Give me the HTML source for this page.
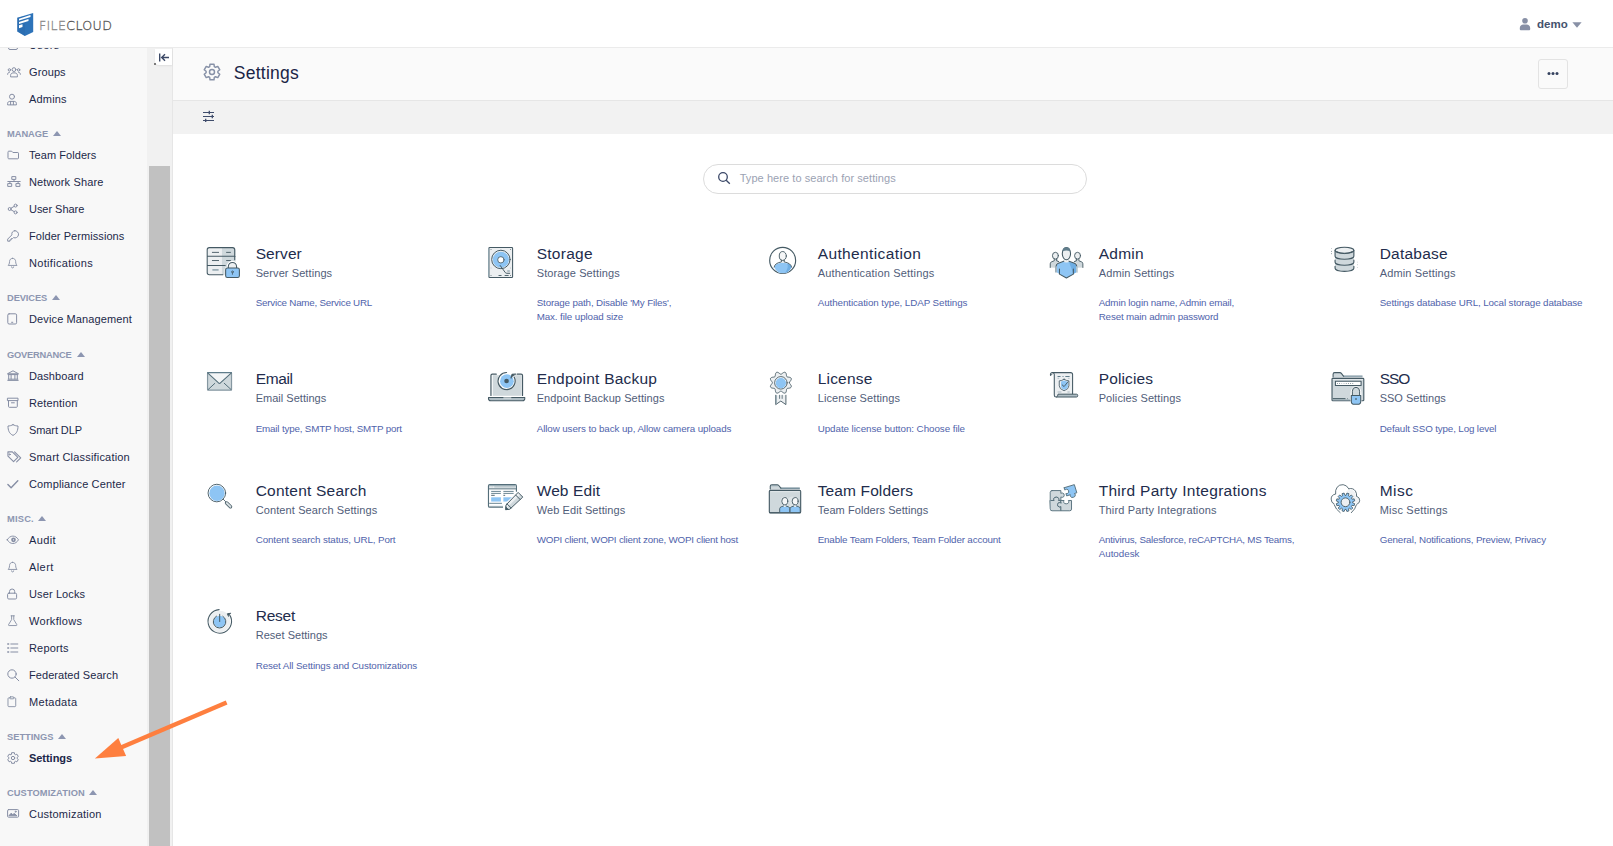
<!DOCTYPE html>
<html lang="en"><head><meta charset="utf-8"><title>FileCloud Settings</title>
<style>
*{box-sizing:border-box;margin:0;padding:0}
html,body{width:1613px;height:846px;overflow:hidden;background:#fff;font-family:"Liberation Sans", sans-serif;}
body{position:relative}
.abs,.si,.sh,.ct,.cs,.cd,.bi{position:absolute}
#top{position:absolute;left:0;top:0;width:1613px;height:48px;background:#fff;border-bottom:1px solid #ebebeb;z-index:5}
#side{position:absolute;left:0;top:48px;width:147px;height:798px;background:#f8f8f8;overflow:hidden}
#sidein{position:absolute;left:0;top:-48px;width:147px}
#track{position:absolute;left:147px;top:48px;width:25px;height:798px;background:#f1f1f1}
#thumb{position:absolute;left:149px;top:166px;width:21px;height:680px;background:#c1c1c1}
#vline{position:absolute;left:172px;top:48px;width:1px;height:798px;background:#e6e6e6}
#collapse{position:absolute;left:155px;top:48.500px;width:17px;height:16.500px;background:#fff;border-bottom-left-radius:4px;box-shadow:0 1px 2px rgba(0,0,0,.08)}
#phead{position:absolute;left:173px;top:48px;width:1440px;height:53px;background:#fafafa;border-bottom:1px solid #e6e6e6}
#tool{position:absolute;left:173px;top:101px;width:1440px;height:33px;background:#f2f2f2}
.si{left:0;height:16px;width:147px;white-space:nowrap}
.si svg{position:absolute;left:7.200px;top:1.500px;overflow:visible}
.si span{position:absolute;left:29px;top:0;font-size:11px;line-height:16px;color:#1c2849;letter-spacing:0px}
.si.act span{font-weight:bold;color:#1a2547}
.sh{left:7px;height:14px;white-space:nowrap}
.sh span{font-size:9.300px;line-height:14px;font-weight:bold;color:#8d96b1}
.sh i{position:absolute;top:8px;width:0;height:0;border-left:4.300px solid transparent;border-right:4.300px solid transparent;border-bottom:5px solid #8d96b1}
.ct{font-size:15.5px;line-height:18px;color:#222c4c;white-space:nowrap}
.cs{font-size:11px;line-height:14px;color:#515d79;white-space:nowrap}
.cd{font-size:9.800px;line-height:12px;color:#5063ab;white-space:nowrap}
#title{position:absolute;left:233.800px;top:61px;font-size:17.500px;letter-spacing:.24px;line-height:24px;color:#1b2546}
#search{position:absolute;left:703px;top:164px;width:384px;height:30px;border:1px solid #dcdcdc;border-radius:15px;background:#fff}
#search span{position:absolute;left:35.700px;top:6px;font-size:11px;line-height:14px;color:#9ba2b3;letter-spacing:.06px;white-space:nowrap}
#more{position:absolute;left:1538px;top:59px;width:30px;height:30px;border:1px solid #e3e3e3;border-radius:3px;background:#fafafa}
#user{position:absolute;left:1537px;top:16px;font-size:11.500px;line-height:16px;font-weight:bold;color:#45526e}
</style></head><body>
<div id="side"><div id="sidein">
<div class="si" style="top:37px"><svg width="14" height="14" viewBox="0 0 14 14" fill="none" stroke="#868ea4" stroke-width="1" stroke-linecap="round" stroke-linejoin="round"><rect x="1.5" y="1.5" width="9" height="9" rx="1.5"/></svg><span style="letter-spacing:0.394px">Users</span></div>
<div class="si" style="top:64px"><svg width="14" height="14" viewBox="0 0 14 14" fill="none" stroke="#868ea4" stroke-width="1" stroke-linecap="round" stroke-linejoin="round"><circle cx="7" cy="3.6" r="1.9"/><path d="M3.6 10.5v-1.2c0-1.4 1.1-2.4 2.4-2.4h2c1.3 0 2.4 1 2.4 2.4v1.2z"/><circle cx="2.4" cy="3.9" r="1.2"/><circle cx="11.6" cy="3.9" r="1.2"/><path d="M0.6 8.3c0-1.2.8-2 1.8-2M13.4 8.3c0-1.200-.8-2-1.800-2"/></svg><span style="letter-spacing:0.106px">Groups</span></div>
<div class="si" style="top:91px"><svg width="14" height="14" viewBox="0 0 14 14" fill="none" stroke="#868ea4" stroke-width="1" stroke-linecap="round" stroke-linejoin="round"><circle cx="5" cy="3.700" r="2.500"/><path d="M0.6 11.500v-1c0-1.200.9-2.100 2.100-2.100h4.600c1.200 0 2.100.9 2.100 2.100v1z"/><path d="M3.600 8.500v3M6.400 8.500v3"/></svg><span style="letter-spacing:0.184px">Admins</span></div>
<div class="sh" style="top:123px"><span style="letter-spacing:-0.025px">MANAGE</span><i style="left:45.9px"></i></div>
<div class="si" style="top:147px"><svg width="14" height="14" viewBox="0 0 14 14" fill="none" stroke="#868ea4" stroke-width="1" stroke-linecap="round" stroke-linejoin="round"><path d="M1 2.900c0-.4.300-.700.700-.700h3l1.200 1.300h4.900c.4 0 .7.300.7.700v4.900c0 .4-.3.700-.7.700h-9.100c-.4 0-.7-.3-.7-.7z"/></svg><span style="letter-spacing:0.061px">Team Folders</span></div>
<div class="si" style="top:174px"><svg width="14" height="14" viewBox="0 0 14 14" fill="none" stroke="#868ea4" stroke-width="1" stroke-linecap="round" stroke-linejoin="round"><g transform="translate(.5 0)"><rect x="4.700" y="0.600" width="3.600" height="2.800"/><rect x="0.600" y="7.600" width="3.600" height="2.800"/><rect x="8.800" y="7.600" width="3.600" height="2.800"/><path d="M6.500 3.400v2.100M2.400 7.600v-2.100h8.200v2.100M0.300 5.500h12.400"/></g></svg><span style="letter-spacing:0.129px">Network Share</span></div>
<div class="si" style="top:201px"><svg width="14" height="14" viewBox="0 0 14 14" fill="none" stroke="#868ea4" stroke-width="1" stroke-linecap="round" stroke-linejoin="round"><circle cx="8.600" cy="2.600" r="1.500"/><circle cx="2.700" cy="6" r="1.500"/><circle cx="8.600" cy="9.400" r="1.500"/><path d="M4 5.200l3.300-1.900M4 6.800l3.300 1.900"/></svg><span style="letter-spacing:-0.037px">User Share</span></div>
<div class="si" style="top:228px"><svg width="14" height="14" viewBox="0 0 14 14" fill="none" stroke="#868ea4" stroke-width="1" stroke-linecap="round" stroke-linejoin="round"><path d="M7.800 0.700a3.600 3.600 0 1 1-1.300 6.900l-1 1h-1.300v1.300h-1.300v1.300h-2.200v-2.100l4.200-4.200a3.600 3.600 0 0 1 2.900-4.200z"/></svg><span style="letter-spacing:0.068px">Folder Permissions</span></div>
<div class="si" style="top:255px"><svg width="14" height="14" viewBox="0 0 14 14" fill="none" stroke="#868ea4" stroke-width="1" stroke-linecap="round" stroke-linejoin="round"><path transform="translate(.2 .6) scale(.9)" d="M6 0.800c2.100 0 3.400 1.600 3.400 3.600 0 2.600 1.100 3.800 1.500 4.300h-9.800c.4-.5 1.500-1.700 1.500-4.300 0-2 1.300-3.600 3.400-3.600zM4.800 10.300a1.200 1.200 0 0 0 2.400 0"/></svg><span style="letter-spacing:0.316px">Notifications</span></div>
<div class="sh" style="top:287px"><span style="letter-spacing:-0.088px">DEVICES</span><i style="left:45.0px"></i></div>
<div class="si" style="top:311px"><svg width="14" height="14" viewBox="0 0 14 14" fill="none" stroke="#868ea4" stroke-width="1" stroke-linecap="round" stroke-linejoin="round"><rect x="0.800" y="0.800" width="8.800" height="10.200" rx="1.300"/><path d="M4.600 9.300h1.200"/></svg><span style="letter-spacing:0.126px">Device Management</span></div>
<div class="sh" style="top:344px"><span style="letter-spacing:-0.205px">GOVERNANCE</span><i style="left:69.5px"></i></div>
<div class="si" style="top:368px"><svg width="14" height="14" viewBox="0 0 14 14" fill="none" stroke="#868ea4" stroke-width="1" stroke-linecap="round" stroke-linejoin="round"><path d="M0.800 3.600l5.200-2.800 5.200 2.800zM1.700 5v4M4.100 5v4M7.900 5v4M10.300 5v4M0.800 10.400h10.400M1.200 4.600h9.600M1.200 9.200h9.600"/></svg><span style="letter-spacing:0.086px">Dashboard</span></div>
<div class="si" style="top:395px"><svg width="14" height="14" viewBox="0 0 14 14" fill="none" stroke="#868ea4" stroke-width="1" stroke-linecap="round" stroke-linejoin="round"><rect x="0.800" y="1.200" width="10.200" height="2.400"/><path d="M1.500 3.600v5.900c0 .5.400.8.800.8h7.200c.4 0 .8-.3.800-.8v-5.900M4.500 5.800h2.800"/></svg><span style="letter-spacing:0.152px">Retention</span></div>
<div class="si" style="top:422px"><svg width="14" height="14" viewBox="0 0 14 14" fill="none" stroke="#868ea4" stroke-width="1" stroke-linecap="round" stroke-linejoin="round"><path d="M6 0.700c1.700.9 3.300 1.200 5 1.300 0 4.300-1.200 7.600-5 9.400-3.800-1.800-5-5.100-5-9.400 1.700-.1 3.300-.4 5-1.300z"/></svg><span style="letter-spacing:-0.087px">Smart DLP</span></div>
<div class="si" style="top:449px"><svg width="14" height="14" viewBox="0 0 14 14" fill="none" stroke="#868ea4" stroke-width="1" stroke-linecap="round" stroke-linejoin="round"><path transform="translate(.3 -.6) scale(1.1)" d="M0.600 1.300h4l5 5-3.900 3.900-5.100-5zM6.600 1.300l5.600 5.500-3.700 3.700"/><circle cx="2.700" cy="3.400" r=".6"/></svg><span style="letter-spacing:0.184px">Smart Classification</span></div>
<div class="si" style="top:476px"><svg width="14" height="14" viewBox="0 0 14 14" fill="none" stroke="#868ea4" stroke-width="1" stroke-linecap="round" stroke-linejoin="round"><path d="M0.900 6.600l3.200 3.200 6.700-7" stroke-width="1.400"/></svg><span style="letter-spacing:0.134px">Compliance Center</span></div>
<div class="sh" style="top:508px"><span style="letter-spacing:0.217px">MISC.</span><i style="left:31.4px"></i></div>
<div class="si" style="top:532px"><svg width="14" height="14" viewBox="0 0 14 14" fill="none" stroke="#868ea4" stroke-width="1" stroke-linecap="round" stroke-linejoin="round"><path transform="translate(-.3 .3) scale(.95)" d="M0.600 5.800c1.500-2.600 3.500-3.900 5.900-3.900s4.400 1.300 5.900 3.900c-1.500 2.600-3.500 3.900-5.900 3.900s-4.400-1.300-5.900-3.900z"/><circle cx="6.500" cy="5.800" r="1.500" stroke-width="1.700"/></svg><span style="letter-spacing:0.357px">Audit</span></div>
<div class="si" style="top:559px"><svg width="14" height="14" viewBox="0 0 14 14" fill="none" stroke="#868ea4" stroke-width="1" stroke-linecap="round" stroke-linejoin="round"><path transform="translate(.2 .6) scale(.9)" d="M6 0.800c2.100 0 3.400 1.600 3.400 3.600 0 2.600 1.100 3.800 1.500 4.300h-9.800c.4-.5 1.500-1.700 1.500-4.300 0-2 1.300-3.600 3.400-3.600zM4.800 10.300a1.200 1.200 0 0 0 2.400 0"/></svg><span style="letter-spacing:0.42px">Alert</span></div>
<div class="si" style="top:586px"><svg width="14" height="14" viewBox="0 0 14 14" fill="none" stroke="#868ea4" stroke-width="1" stroke-linecap="round" stroke-linejoin="round"><rect x="0.600" y="5.200" width="9" height="5.800" rx="1.200"/><path d="M2.500 5.200v-1.600a2.600 2.600 0 0 1 5.200 0v1.600"/></svg><span style="letter-spacing:0.12px">User Locks</span></div>
<div class="si" style="top:613px"><svg width="14" height="14" viewBox="0 0 14 14" fill="none" stroke="#868ea4" stroke-width="1" stroke-linecap="round" stroke-linejoin="round"><path transform="translate(.3 .2) scale(.9)" d="M4.200 0.700h3.600M4.800 0.700v4.200l-3.400 5.600c-.3.500 0 1 .6 1h8c.6 0 .9-.5.600-1l-3.400-5.600v-4.200"/></svg><span style="letter-spacing:0.297px">Workflows</span></div>
<div class="si" style="top:640px"><svg width="14" height="14" viewBox="0 0 14 14" fill="none" stroke="#868ea4" stroke-width="1" stroke-linecap="round" stroke-linejoin="round"><path d="M3.800 2h7M3.800 6h7M3.800 10h7"/><path d="M0.800 2h.8M0.800 6h.8M0.800 10h.8" stroke-width="1.500"/></svg><span style="letter-spacing:0.164px">Reports</span></div>
<div class="si" style="top:667px"><svg width="14" height="14" viewBox="0 0 14 14" fill="none" stroke="#868ea4" stroke-width="1" stroke-linecap="round" stroke-linejoin="round"><circle cx="5" cy="5" r="4.200"/><path d="M8.100 8.100l3.700 3.700"/></svg><span style="letter-spacing:0.063px">Federated Search</span></div>
<div class="si" style="top:694px"><svg width="14" height="14" viewBox="0 0 14 14" fill="none" stroke="#868ea4" stroke-width="1" stroke-linecap="round" stroke-linejoin="round"><g transform="translate(0 .3) scale(.9)"><path d="M3.300 1.700h-1.300c-.5 0-.9.400-.9.900v8c0 .5.400.9.900.9h6.800c.5 0 .9-.4.900-.9v-8c0-.5-.4-.9-.9-.9h-1.300"/><rect x="3.300" y="0.600" width="4.200" height="2.200" rx=".6"/></g></svg><span style="letter-spacing:0.305px">Metadata</span></div>
<div class="sh" style="top:726px"><span style="letter-spacing:0.0px">SETTINGS</span><i style="left:51.2px"></i></div>
<div class="si act" style="top:750px"><svg width="14" height="14" viewBox="0 0 14 14" fill="none" stroke="#868ea4" stroke-width="1" stroke-linecap="round" stroke-linejoin="round"><circle cx="6" cy="6" r="1.700"/><path d="M4.4 2.2L4.6 0.7L7.4 0.7L7.6 2.2L8.4 2.7L9.9 2.2L11.3 4.5L10.1 5.5L10.1 6.5L11.3 7.5L9.9 9.8L8.4 9.3L7.6 9.8L7.4 11.3L4.6 11.3L4.4 9.8L3.6 9.3L2.1 9.8L0.7 7.5L1.9 6.5L1.9 5.5L0.7 4.5L2.1 2.2L3.6 2.7z"/></svg><span style="letter-spacing:-0.042px">Settings</span></div>
<div class="sh" style="top:782px"><span style="letter-spacing:0.09px">CUSTOMIZATION</span><i style="left:82.4px"></i></div>
<div class="si" style="top:806px"><svg width="14" height="14" viewBox="0 0 14 14" fill="none" stroke="#868ea4" stroke-width="1" stroke-linecap="round" stroke-linejoin="round"><rect x="0.600" y="1.600" width="11" height="7.600" rx="1"/><path d="M2.200 7.400l2-2.200 1.600 1.500 1.400-1.200 2.400 2z" fill="#868ea4"/><circle cx="8.600" cy="3.700" r=".5"/></svg><span style="letter-spacing:0.226px">Customization</span></div>
</div></div>
<div id="track"></div><div id="thumb"></div><div id="vline"></div>
<div id="top">
<svg class="abs" style="left:15px;top:10px" width="22" height="28" viewBox="0 0 22 28"><path d="M2.300 7.800L18.200 2.900v19.200l-8.300 3.900-7.600-4.600z" fill="#2d73b9"/><path d="M2.300 7.800L10 6v20l-7.700-4.600z" fill="#2a69ad" opacity=".55"/><path d="M4 8.700l11.500-3.600v1.900L4 10.600zM4 12l9.500-2.900v1.900L4 13.900zM4 15.300l3.500-1.100v2.900L4 18.200z" fill="#fff"/></svg>
<div class="abs" id="logo" style="left:38.900px;top:16.700px;-webkit-text-stroke:.3px;font-family:'DejaVu Sans Light','DejaVu Sans',sans-serif;font-weight:200;font-size:12.600px;line-height:17px;letter-spacing:.36px;white-space:nowrap"><span style="color:#8a8a8a">FILE</span><span style="color:#555">CLOUD</span></div>
<svg class="abs" style="left:1519.200px;top:16.500px" width="12" height="14" viewBox="0 0 12 14"><circle cx="6" cy="3.800" r="2.800" fill="#8890a6"/><path d="M0.800 12.300v-1.300c0-2.300 1.800-3.600 3.400-3.600h3.600c1.600 0 3.400 1.300 3.400 3.600v1.300c0 .6-.4.900-.9.900h-8.600c-.5 0-.9-.3-.9-.9z" fill="#8890a6"/></svg>
<div id="user">demo</div>
<svg class="abs" style="left:1571.800px;top:22px" width="10" height="6" viewBox="0 0 10 6"><path d="M0.400 0.300h9.200L5 5.700z" fill="#8890a6"/></svg>
</div>
<div id="collapse"><svg width="17" height="17" viewBox="0 0 17 17" fill="none" stroke="#3c4966" stroke-width="1.400"><path d="M4.700 4.500v8M14 8.500H6.800M10 5.200L6.700 8.500l3.300 3.300"/></svg></div>
<div id="phead"></div><div class="abs" style="left:154px;top:63px;width:1.500px;height:1.500px;background:#555;border-radius:1px"></div>
<svg class="abs" style="left:202.100px;top:62.200px" width="20" height="20" viewBox="0 0 20 20" fill="none" stroke="#8791a7" stroke-width="1.450" stroke-linejoin="round"><circle cx="10" cy="10" r="2.500"/><path d="M7.7 4.6L8.0 2.2L12.0 2.2L12.3 4.6L13.5 5.3L15.8 4.4L17.8 7.8L15.9 9.3L15.9 10.7L17.8 12.2L15.8 15.6L13.5 14.7L12.3 15.4L12.0 17.8L8.0 17.8L7.7 15.4L6.5 14.7L4.2 15.6L2.2 12.2L4.1 10.7L4.1 9.3L2.2 7.8L4.2 4.4L6.5 5.3z"/></svg>
<div id="title">Settings</div>
<div id="more"><svg width="28" height="28" viewBox="0 0 28 28"><circle cx="10" cy="13.500" r="1.500" fill="#35425f"/><circle cx="14" cy="13.500" r="1.500" fill="#35425f"/><circle cx="18" cy="13.500" r="1.500" fill="#35425f"/></svg></div>
<div id="tool"></div>
<svg class="abs" style="left:202px;top:110px" width="13" height="12" viewBox="0 0 13 12" fill="none" stroke="#3f4c6b" stroke-width="1"><path d="M1 2.500h11M1 6.500h11M1 10.500h11"/><path d="M7.300 0.800v3.400M10.300 4.800v3.400M3.700 8.800v3.400" stroke-width="1.300"/></svg>
<div id="search"><svg class="abs" style="left:13.300px;top:6.200px" width="14" height="14" viewBox="0 0 14 14" fill="none" stroke="#3b4868" stroke-width="1.300"><circle cx="6" cy="6" r="4.300"/><path d="M9.200 9.200l3.600 3.600"/></svg><span>Type here to search for settings</span></div>
<div class="ct" style="left:255.7px;top:245px;letter-spacing:0.089px">Server</div>
<div class="cs" style="left:255.7px;top:266px;letter-spacing:0.085px">Server Settings</div>
<div class="cd" style="left:255.7px;top:297.2px;letter-spacing:-0.224px">Service Name, Service URL</div>
<svg class="bi" style="left:195px;top:235px" width="60" height="60" viewBox="0 0 60 60"><g transform="scale(0.07092)" fill="none" stroke="#455a64" stroke-width="15" stroke-linecap="round" stroke-linejoin="round">
<path d="M202 178h338q30 0 30 30v322q0 30-30 30h-338q-30 0-30-30v-322q0-30 30-30z" fill="#eceff1" stroke="none"/>
<path d="M380 178h160q30 0 30 30v322q0 30-30 30h-160z" fill="#cfd8dc" stroke="none"/>
<path d="M560 350V208q0-30-30-30H202q-30 0-30 30v322q0 30 30 30h190M176 300h390M176 430h250"/>
<path d="M245 245h88M445 245h55M245 360h88M445 360h55" stroke-width="13"/>
<path d="M245 492h88" stroke="#90a4ae" stroke-width="22" stroke-linecap="butt"/>
<path d="M470 470v-25a58 58 0 0 1 116 0v25" stroke="#fff" stroke-width="45"/>
<rect x="418" y="452" width="222" height="160" rx="30" fill="#fff" stroke="none"/>
<path d="M470 470v-25a58 58 0 0 1 116 0v25" fill="#eceff1"/>
<rect x="432" y="466" width="194" height="132" rx="24" fill="#8ec5f4" stroke="#455a64"/>
<circle cx="528" cy="520" r="13" stroke-width="11"/><path d="M528 533v22" stroke-width="11"/>
</g></svg>
<div class="ct" style="left:536.7px;top:245px;letter-spacing:0.268px">Storage</div>
<div class="cs" style="left:536.7px;top:266px;letter-spacing:0.111px">Storage Settings</div>
<div class="cd" style="left:536.7px;top:297.2px;letter-spacing:-0.159px">Storage path, Disable 'My Files',</div>
<div class="cd" style="left:536.7px;top:311.2px;letter-spacing:-0.109px">Max. file upload size</div>
<svg class="bi" style="left:475px;top:235px" width="60" height="60" viewBox="0 0 60 60"><g transform="scale(0.07092)" fill="none" stroke="#455a64" stroke-width="15" stroke-linecap="round" stroke-linejoin="round">
<rect x="196" y="176" width="334" height="424" rx="12" fill="#eceff1"/>
<path d="M192 190v395" stroke="#90a4ae" stroke-width="14"/>
<circle cx="365" cy="345" r="130" fill="#eceff1" stroke-width="14"/>
<circle cx="365" cy="348" r="113" fill="#8ec5f4" stroke="none"/>
<circle cx="365" cy="350" r="45" fill="#fff" stroke-width="12"/>
<path d="M355 430l72 100q8 10 22 10h40" stroke-width="14"/>
<rect x="455" y="495" width="36" height="26" fill="#90a4ae" stroke="none" opacity=".7"/>
<path d="M332 571h42M418 571h56" stroke-width="13" stroke-linecap="butt"/>
<g fill="#455a64" stroke="none"><circle cx="226" cy="206" r="7"/><circle cx="500" cy="206" r="7"/><circle cx="226" cy="466" r="6" opacity=".5"/><circle cx="500" cy="466" r="6" opacity=".5"/><circle cx="226" cy="572" r="7"/><circle cx="500" cy="572" r="7"/></g>
</g></svg>
<div class="ct" style="left:817.7px;top:245px;letter-spacing:0.381px">Authentication</div>
<div class="cs" style="left:817.7px;top:266px;letter-spacing:0.186px">Authentication Settings</div>
<div class="cd" style="left:817.7px;top:297.2px;letter-spacing:-0.077px">Authentication type, LDAP Settings</div>
<svg class="bi" style="left:755px;top:235px" width="60" height="60" viewBox="0 0 60 60"><g transform="scale(0.07092)" fill="none" stroke="#455a64" stroke-width="15" stroke-linecap="round" stroke-linejoin="round">
<circle cx="390" cy="358" r="183" fill="#fff" stroke-width="16"/>
<path d="M372 345v35q-100 20-102 70q10 40 60 75q60 28 130 0q50-35 58-75q-5-50-106-70v-35z" fill="#eceff1" stroke="none"/>
<path d="M275 455q0-55 117-65q120 10 122 65q-15 45-60 70q-62 25-125 0q-45-28-54-70z" fill="#8ec5f4" stroke="none"/>
<path d="M455 400q55 15 59 55q-15 45-60 70q-20 8-35 10q60-60 36-135z" fill="#6faee3" stroke="none"/>
<ellipse cx="392" cy="296" rx="50" ry="63" fill="#f5f6f7" stroke-width="13"/>
<path d="M372 352v28q-95 15-102 72M412 352v28q95 15 104 72" stroke-width="13"/>
</g></svg>
<div class="ct" style="left:1098.7px;top:245px;letter-spacing:0.241px">Admin</div>
<div class="cs" style="left:1098.7px;top:266px;letter-spacing:0.124px">Admin Settings</div>
<div class="cd" style="left:1098.7px;top:297.2px;letter-spacing:-0.151px">Admin login name, Admin email,</div>
<div class="cd" style="left:1098.7px;top:311.2px;letter-spacing:-0.16px">Reset main admin password</div>
<svg class="bi" style="left:1035px;top:235px" width="60" height="60" viewBox="0 0 60 60"><g transform="scale(0.07092)" fill="none" stroke="#455a64" stroke-width="15" stroke-linecap="round" stroke-linejoin="round">
<path d="M215 460v-50q0-25 25-32l50-15v-25h-5M330 380l-40-17" fill="#cfd8dc" stroke="none"/>
<path d="M215 460v-55q0-20 22-28l45-16v-22h40v22l25 10-45 30-10 60z" fill="#cfd8dc" stroke="none"/>
<path d="M675 460v-55q0-20-22-28l-45-16v-22h-40v22l-25 10 45 30 10 60z" fill="#cfd8dc" stroke="none"/>
<ellipse cx="288" cy="292" rx="42" ry="48" fill="#eceff1" stroke-width="13"/>
<ellipse cx="600" cy="292" rx="42" ry="48" fill="#eceff1" stroke-width="13"/>
<path d="M215 458v-52q0-22 22-29l35-14v-22M304 339v24l30 12" stroke-width="13"/>
<path d="M675 458v-52q0-22-22-29l-35-14v-22M586 339v24l-30 12" stroke-width="13"/>
<path d="M295 530v-95q0-30 30-40l80-28v-30h76v30l80 28q30 10 30 40v95l-48 28-100 52-100-52z" fill="#fff" stroke="none"/>
<path d="M305 525v-90q0-25 28-35l75-28h70l75 28q28 10 28 35v90l-40 25-98 55-98-55z" fill="#8ec5f4" stroke="none"/>
<path d="M480 385l73 15q28 10 28 35v90l-40 25q-30-90-61-165z" fill="#6faee3" stroke="none"/>
<path d="M295 530v-95" stroke="#90a4ae" stroke-width="22" stroke-linecap="butt"/>
<path d="M592 530v-95" stroke="#90a4ae" stroke-width="14" stroke-linecap="butt"/>
<path d="M405 345v28q0 15 38 15t38-15v-28" fill="#eceff1" stroke="none"/>
<ellipse cx="443" cy="262" rx="58" ry="87" fill="#eceff1"/>
<path d="M388 232q0-58 55-58t55 58q-55-30-110 0z" fill="#607d8b" stroke="none"/>
<path d="M300 432q0-25 28-35l78-28M586 432q0-25-28-35l-78-28M345 480v72l98 55 98-55v-72"/>
</g></svg>
<div class="ct" style="left:1379.7px;top:245px;letter-spacing:0.235px">Database</div>
<div class="cs" style="left:1379.7px;top:266px;letter-spacing:0.148px">Admin Settings</div>
<div class="cd" style="left:1379.7px;top:297.2px;letter-spacing:-0.118px">Settings database URL, Local storage database</div>
<svg class="bi" style="left:1315px;top:235px" width="60" height="60" viewBox="0 0 60 60"><g transform="scale(0.07092)" fill="none" stroke="#455a64" stroke-width="15" stroke-linecap="round" stroke-linejoin="round">
<path d="M283 215v255a132 42 0 0 0 265 0v-255z" fill="#cfd8dc" stroke="none"/>
<ellipse cx="415.5" cy="215" rx="132.5" ry="42" fill="#eceff1" stroke-width="16"/>
<path d="M310 238q40 24 105 24t107-24" stroke-width="14"/>
<path d="M283 215v85a132.5 42 0 0 0 265 0v-85M283 355v30a132.5 42 0 0 0 265 0v-30M283 440v30a132.5 42 0 0 0 265 0v-30" stroke-width="16"/>
<g fill="#455a64" stroke="none"><circle cx="233" cy="190" r="6" opacity=".6"/><circle cx="233" cy="228" r="7"/><circle cx="233" cy="265" r="7"/><circle cx="597" cy="382" r="6" opacity=".5"/><circle cx="597" cy="420" r="6" opacity=".6"/><circle cx="597" cy="458" r="6" opacity=".5"/></g>
</g></svg>
<div class="ct" style="left:255.7px;top:370px;letter-spacing:-0.364px">Email</div>
<div class="cs" style="left:255.7px;top:391px;letter-spacing:0.015px">Email Settings</div>
<div class="cd" style="left:255.7px;top:423.2px;letter-spacing:-0.167px">Email type, SMTP host, SMTP port</div>
<svg class="bi" style="left:195px;top:360px" width="60" height="60" viewBox="0 0 60 60"><g transform="scale(0.07092)" fill="none" stroke="#455a64" stroke-width="15" stroke-linecap="round" stroke-linejoin="round">
<rect x="177" y="178" width="338" height="248" rx="10" fill="#cfd8dc" stroke="#8597a1" stroke-width="17"/>
<path d="M180 180l165 154 167-154z" fill="#f3f5f6" stroke="none"/>
<path d="M178 178h336" stroke="#607d8b" stroke-width="15"/>
<path d="M182 186l150 138q13 10 26 0l152-138" stroke="#546e7a" stroke-width="15"/>
<path d="M186 416l93-86M508 416l-96-88" stroke="#546e7a" stroke-width="14"/>
</g></svg>
<div class="ct" style="left:536.7px;top:370px;letter-spacing:0.221px">Endpoint Backup</div>
<div class="cs" style="left:536.7px;top:391px;letter-spacing:0.079px">Endpoint Backup Settings</div>
<div class="cd" style="left:536.7px;top:423.2px;letter-spacing:-0.093px">Allow users to back up, Allow camera uploads</div>
<svg class="bi" style="left:475px;top:360px" width="60" height="60" viewBox="0 0 60 60"><g transform="scale(0.07092)" fill="none" stroke="#455a64" stroke-width="15" stroke-linecap="round" stroke-linejoin="round">
<path d="M250 214h405v291h-405z" fill="#cfd8dc" stroke="none"/>
<path d="M300 200h-55q-20 0-20 20v280M595 200h55q20 0 20 20v280" stroke-width="17"/>
<path d="M190 528h512v15q0 32-32 32h-448q-32 0-32-32z" fill="#b0bec5" stroke-width="15"/>
<path d="M400 528h112v14h-112z" fill="#eceff1" stroke="none"/>
<circle cx="447" cy="296" r="132" fill="#fff" stroke="none"/>
<circle cx="450" cy="298" r="97" fill="#8ec5f4" stroke="none"/>
<circle cx="445" cy="296" r="33" fill="#455a64" stroke="none"/>
<path d="M445 176a121 121 0 1 0 107 64" stroke-width="17"/>
<path d="M508 254l15-50 50-5" stroke-width="17"/>
<path d="M510 248l15-44 38 8z" fill="#455a64" stroke="none"/>
</g></svg>
<div class="ct" style="left:817.7px;top:370px;letter-spacing:0.195px">License</div>
<div class="cs" style="left:817.7px;top:391px;letter-spacing:0.112px">License Settings</div>
<div class="cd" style="left:817.7px;top:423.2px;letter-spacing:-0.056px">Update license button: Choose file</div>
<svg class="bi" style="left:755px;top:360px" width="60" height="60" viewBox="0 0 60 60"><g transform="scale(0.07092)" fill="none" stroke="#455a64" stroke-width="15" stroke-linecap="round" stroke-linejoin="round">
<path d="M485.0 320.0L485.8 324.7L488.2 329.7L491.9 335.0L496.5 340.8L501.3 347.1L505.9 353.8L509.5 360.8L511.8 367.7L512.4 374.4L511.0 380.5L507.6 385.8L502.5 390.1L496.0 393.4L488.5 395.7L480.6 397.2L472.7 398.3L465.4 399.1L459.0 400.3L453.8 402.1L449.9 404.9L447.1 408.8L445.3 414.0L444.1 420.4L443.3 427.7L442.2 435.6L440.7 443.5L438.4 451.0L435.1 457.5L430.8 462.6L425.5 466.0L419.4 467.4L412.7 466.8L405.8 464.5L398.8 460.9L392.1 456.3L385.8 451.5L380.0 446.9L374.7 443.2L369.7 440.8L365.0 440.0L360.3 440.8L355.3 443.2L350.0 446.9L344.2 451.5L337.9 456.3L331.2 460.9L324.2 464.5L317.3 466.8L310.6 467.4L304.5 466.0L299.2 462.6L294.9 457.5L291.6 451.0L289.3 443.5L287.8 435.6L286.7 427.7L285.9 420.4L284.7 414.0L282.9 408.8L280.1 404.9L276.2 402.1L271.0 400.3L264.6 399.1L257.3 398.3L249.4 397.2L241.5 395.7L234.0 393.4L227.5 390.1L222.4 385.8L219.0 380.5L217.6 374.4L218.2 367.7L220.5 360.8L224.1 353.8L228.7 347.1L233.5 340.8L238.1 335.0L241.8 329.7L244.2 324.7L245.0 320.0L244.2 315.3L241.8 310.3L238.1 305.0L233.5 299.2L228.7 292.9L224.1 286.2L220.5 279.2L218.2 272.3L217.6 265.6L219.0 259.5L222.4 254.2L227.5 249.9L234.0 246.6L241.5 244.3L249.4 242.8L257.3 241.7L264.6 240.9L271.0 239.7L276.2 237.9L280.1 235.1L282.9 231.2L284.7 226.0L285.9 219.6L286.7 212.3L287.8 204.4L289.3 196.5L291.6 189.0L294.9 182.5L299.2 177.4L304.5 174.0L310.6 172.6L317.3 173.2L324.2 175.5L331.2 179.1L337.9 183.7L344.2 188.5L350.0 193.1L355.3 196.8L360.3 199.2L365.0 200.0L369.7 199.2L374.7 196.8L380.0 193.1L385.8 188.5L392.1 183.7L398.8 179.1L405.8 175.5L412.7 173.2L419.4 172.6L425.5 174.0L430.8 177.4L435.1 182.5L438.4 189.0L440.7 196.5L442.2 204.4L443.3 212.3L444.1 219.6L445.3 226.0L447.1 231.2L449.9 235.1L453.8 237.9L459.0 239.7L465.4 240.9L472.7 241.7L480.6 242.8L488.5 244.3L496.0 246.6L502.5 249.9L507.6 254.2L511.0 259.5L512.4 265.6L511.8 272.3L509.5 279.2L505.9 286.2L501.3 292.9L496.5 299.2L491.9 305.0L488.2 310.3L485.8 315.3z" fill="#eceff1" stroke-width="13"/>
<circle cx="365" cy="322" r="88" fill="#fff" stroke-width="13"/>
<circle cx="365" cy="324" r="73" fill="#8ec5f4" stroke="none"/>
<path d="M292 497v132l72-50 72 50v-132z" fill="#eceff1" stroke="none"/>
<path d="M292 497v132l72-50 72 50v-132" stroke-width="13"/>
<path d="M300 497v118" stroke="#90a4ae" stroke-width="14" stroke-linecap="butt"/>
<path d="M347 497v45M383 497v45" stroke-width="11"/>
</g></svg>
<div class="ct" style="left:1098.7px;top:370px;letter-spacing:0.141px">Policies</div>
<div class="cs" style="left:1098.7px;top:391px;letter-spacing:0.093px">Policies Settings</div>
<svg class="bi" style="left:1035px;top:360px" width="60" height="60" viewBox="0 0 60 60"><g transform="scale(0.07092)" fill="none" stroke="#455a64" stroke-width="15" stroke-linecap="round" stroke-linejoin="round">
<path d="M272 178h230q28 0 28 28v290h-210q0 25-25 25t-23-25z" fill="#eceff1" stroke="none"/>
<path d="M218 215q-5-37 30-37h254q28 0 28 28v275" stroke-width="15"/>
<path d="M248 178q24 0 24 28v290q0 26 26 26" stroke-width="15"/>
<path d="M218 215q22 0 22-12" stroke-width="13"/>
<path d="M330 482h255q18 0 18 20t-18 20h-285q22-5 22-22z" fill="#b0bec5" stroke-width="14"/>
<path d="M318 232h42M388 232h14M428 232h60" stroke="#607d8b" stroke-width="16" stroke-linecap="butt"/>
<path d="M318 258h22M465 258h22" stroke="#90a4ae" stroke-width="12" stroke-linecap="butt" opacity=".7"/>
<path d="M318 452h55M457 452h33" stroke="#90a4ae" stroke-width="16" stroke-linecap="butt" opacity=".7"/>
<path d="M410 272q35 22 68 22v70q0 45-68 70q-68-25-68-70v-70q33 0 68-22z" fill="#eceff1" stroke-width="12"/>
<path d="M412 290q28 15 52 17v58q0 35-52 55q-45-18-45-55v-62q25-3 45-13z" fill="#8ec5f4" stroke="none"/>
<path d="M383 350l27 25 55-68" stroke-width="13"/>
</g></svg>
<div class="ct" style="left:1379.7px;top:370px;letter-spacing:-1.066px">SSO</div>
<div class="cs" style="left:1379.7px;top:391px;letter-spacing:0.006px">SSO Settings</div>
<div class="cd" style="left:1379.7px;top:423.2px;letter-spacing:-0.138px">Default SSO type, Log level</div>
<svg class="bi" style="left:1315px;top:360px" width="60" height="60" viewBox="0 0 60 60"><g transform="scale(0.07092)" fill="none" stroke="#455a64" stroke-width="15" stroke-linecap="round" stroke-linejoin="round">
<path d="M255 250v-50q0-22 22-22h75q12 0 20 10l30 40h265v22z" fill="#cfd8dc" stroke="none"/>
<path d="M400 228h270" stroke="#90a4ae" stroke-width="22" stroke-linecap="butt"/>
<path d="M255 240v-40q0-22 22-22h75q12 0 20 10l32 42" stroke-width="15"/>
<rect x="240" y="260" width="448" height="315" rx="12" fill="#cfd8dc" stroke-width="16"/>
<path d="M256 276h416" stroke="#fff" stroke-width="10" opacity=".6"/>
<rect x="288" y="300" width="362" height="60" fill="#fff" stroke-width="15"/>
<g fill="#455a64" stroke="none"><circle cx="316" cy="331" r="7"/><circle cx="347" cy="331" r="7"/><circle cx="378" cy="331" r="6" opacity=".6"/><circle cx="409" cy="331" r="6" opacity=".7"/><circle cx="440" cy="331" r="7"/><circle cx="471" cy="331" r="7"/><circle cx="502" cy="331" r="7"/><circle cx="533" cy="331" r="7"/><circle cx="458" cy="545" r="7"/></g>
<path d="M250 545h180" stroke-width="15" stroke-linecap="butt"/>
<path d="M250 562h240" stroke="#90a4ae" stroke-width="12" stroke-linecap="butt"/>
<path d="M500 640v-150q0-120 78-120t78 120v150z" fill="#fff" stroke="none"/>
<path d="M527 505v-65q0-55 51-55t51 55v65z" fill="#cfd8dc" stroke-width="14"/>
<path d="M512 500h133v80q0 45-45 45h-43q-45 0-45-45z" fill="#8ec5f4" stroke-width="15"/>
<path d="M570 535h16v30h-16z" fill="#455a64" stroke="none"/>
</g></svg>
<div class="ct" style="left:255.7px;top:482px;letter-spacing:0.222px">Content Search</div>
<div class="cs" style="left:255.7px;top:503px;letter-spacing:0.107px">Content Search Settings</div>
<div class="cd" style="left:255.7px;top:534.2px;letter-spacing:-0.125px">Content search status, URL, Port</div>
<svg class="bi" style="left:195px;top:470px" width="60" height="60" viewBox="0 0 60 60"><g transform="scale(0.07092)" fill="none" stroke="#455a64" stroke-width="15" stroke-linecap="round" stroke-linejoin="round">
<circle cx="308" cy="325" r="124" fill="#fff" stroke-width="13"/>
<circle cx="310" cy="328" r="108" fill="#8ec5f4" stroke="none"/>
<path d="M398 412l34 34" stroke-width="12"/>
<path d="M446 466l54 52" stroke="#455a64" stroke-width="50"/>
<path d="M446 466l54 52" stroke="#cfd8dc" stroke-width="27"/>
<path d="M452 462l52 50" stroke="#fff" stroke-width="8" opacity=".7"/>
</g></svg>
<div class="ct" style="left:536.7px;top:482px;letter-spacing:0.099px">Web Edit</div>
<div class="cs" style="left:536.7px;top:503px;letter-spacing:0.085px">Web Edit Settings</div>
<div class="cd" style="left:536.7px;top:534.2px;letter-spacing:-0.211px">WOPI client, WOPI client zone, WOPI client host</div>
<svg class="bi" style="left:475px;top:470px" width="60" height="60" viewBox="0 0 60 60"><g transform="scale(0.07092)" fill="none" stroke="#455a64" stroke-width="15" stroke-linecap="round" stroke-linejoin="round">
<path d="M584 300v-76q0-18-18-18h-358q-18 0-18 18v282q0 18 18 18h190" stroke="#546e7a" stroke-width="16"/>
<path d="M198 214h378v48h-378z" fill="#cfd8dc" stroke="none"/>
<path d="M196 266h382" stroke="#546e7a" stroke-width="13" stroke-linecap="butt"/>
<path d="M198 222h378" stroke="#78909c" stroke-width="14" stroke-linecap="butt" opacity=".8"/>
<g fill="#fff" stroke="none"><rect x="207" y="232" width="14" height="18"/><rect x="232" y="232" width="14" height="18"/><rect x="257" y="232" width="14" height="18"/></g>
<path d="M228 302h137M228 330h137M400 302h145M400 330h145" stroke="#607d8b" stroke-width="13" stroke-linecap="butt"/>
<path d="M228 357h50M400 357h25" stroke-width="13" stroke-linecap="butt"/>
<rect x="228" y="385" width="137" height="60" fill="#8ec5f4" stroke="none"/>
<rect x="400" y="385" width="142" height="60" fill="#8ec5f4" stroke="none"/>
<path d="M200 470h180" stroke="#607d8b" stroke-width="13" stroke-linecap="butt"/>
<path d="M205 512h190" stroke="#90a4ae" stroke-width="12" stroke-linecap="butt" opacity=".7"/>
<path d="M612 300l80 80-215 195-85 5 5-85z" fill="#fff" stroke="none"/>
<path d="M610 322l62 60-182 172-62-60z" fill="#eceff1" stroke="none"/>
<path d="M640 350l32 32-182 172-32-32z" fill="#cfd8dc" stroke="none"/>
<path d="M612 320l62 62-184 172-55 5 2-60z" stroke-width="14"/>
<path d="M575 355l62 62M452 478l58 58" stroke-width="14"/>
<path d="M437 520l34 34-36 5z" fill="#455a64" stroke-width="10"/>
</g></svg>
<div class="ct" style="left:817.7px;top:482px;letter-spacing:0.127px">Team Folders</div>
<div class="cs" style="left:817.7px;top:503px;letter-spacing:0.058px">Team Folders Settings</div>
<div class="cd" style="left:817.7px;top:534.2px;letter-spacing:-0.156px">Enable Team Folders, Team Folder account</div>
<svg class="bi" style="left:755px;top:470px" width="60" height="60" viewBox="0 0 60 60"><g transform="scale(0.07092)" fill="none" stroke="#455a64" stroke-width="15" stroke-linecap="round" stroke-linejoin="round">
<path d="M215 280v-50q0-22 22-22h75q12 0 20 10l30 38h270v24z" fill="#cfd8dc" stroke="none"/>
<path d="M360 256h272" stroke="#607d8b" stroke-width="18" stroke-linecap="butt"/>
<path d="M215 268v-38q0-22 22-22h78q12 0 20 10l30 38" stroke-width="15"/>
<path d="M232 222h85" stroke="#78909c" stroke-width="12" opacity=".8"/>
<rect x="202" y="288" width="442" height="316" rx="14" fill="#cfd8dc" stroke-width="16"/>
<path d="M222 306h410" stroke="#fff" stroke-width="10" opacity=".6"/>
<path d="M340 600v-60q0-30 30-38l15-5q-25-30-25-65q0-60 60-60t60 60q0 35-25 65l20 8l20-8q-25-30-25-65q0-60 60-60t60 60q0 35-25 65l15 5q30 8 30 38v60z" fill="#fff" stroke="none" opacity=".3"/>
<path d="M348 597v-50q0-22 22-28l30-10v-20h40v20l30 10q22 6 22 28v50z" fill="#8ec5f4" stroke="none"/>
<path d="M400 490v22q0 10 20 10t20-10v-22z" fill="#eceff1" stroke="none"/>
<ellipse cx="420" cy="440" rx="42" ry="52" fill="#f6f7f8" stroke-width="13"/>
<path d="M348 590v-43q0-22 22-28l32-12M492 590v-43q0-22-22-28l-32-12" stroke-width="13"/>
<path d="M494 597v-50q0-22 22-28l30-10v-20h40v20l30 10q22 6 22 28v50z" fill="#8ec5f4" stroke="none"/>
<path d="M546 490v22q0 10 20 10t20-10v-22z" fill="#eceff1" stroke="none"/>
<ellipse cx="566" cy="440" rx="42" ry="52" fill="#f6f7f8" stroke-width="13"/>
<path d="M494 590v-43q0-22 22-28l32-12M638 590v-43q0-22-22-28l-32-12" stroke-width="13"/>
<path d="M205 602h436" stroke-width="14"/>
</g></svg>
<div class="ct" style="left:1098.7px;top:482px;letter-spacing:0.287px">Third Party Integrations</div>
<div class="cs" style="left:1098.7px;top:503px;letter-spacing:0.151px">Third Party Integrations</div>
<div class="cd" style="left:1098.7px;top:534.2px;letter-spacing:-0.209px">Antivirus, Salesforce, reCAPTCHA, MS Teams,</div>
<div class="cd" style="left:1098.7px;top:548.2px;letter-spacing:-0.008px">Autodesk</div>
<svg class="bi" style="left:1035px;top:470px" width="60" height="60" viewBox="0 0 60 60"><g transform="scale(0.07092)" fill="none" stroke="#455a64" stroke-width="15" stroke-linecap="round" stroke-linejoin="round">
<path d="M240 290h125v40q12-8 25-5q22 5 22 30t-22 30q-13 3-25-5v50h-35q8-12 5-25q-5-22-35-22t-35 22q-3 13 5 25h-55v-115q0-25 25-25z" fill="#cfd8dc" stroke="#546e7a" stroke-width="13"/>
<path d="M215 430h55q-8-12-5-25q5-22 35-22t35 22q3 13-5 25h35v35q-12-8-25-5q-22 5-22 30t22 30q13 3 25-5v60h-125q-25 0-25-25z" fill="#cfd8dc" stroke="#546e7a" stroke-width="13"/>
<path d="M365 430h45q-8 12-5 25q5 22 35 22t35-22q3-13-5-25h45v120q0 25-25 25h-125v-60q-12 8-25 5q-22-5-22-30t22-30q13-3 25 5z" fill="#cfd8dc" stroke="#546e7a" stroke-width="13"/>
<path d="M218 300v265" stroke="#90a4ae" stroke-width="12" opacity=".7"/>
<g transform="rotate(-17 505 300)"><path d="M430 225h150v120h-35q8 12 5 25q-5 22-35 22t-35-22q-3-13 5-25h-55v-35q12 8 25 5q22-5 22-30t-22-30q-13-3-25 5z" fill="#8ec5f4" stroke="#546e7a" stroke-width="12" stroke-dasharray="1000" /></g>
</g></svg>
<div class="ct" style="left:1379.7px;top:482px;letter-spacing:0.515px">Misc</div>
<div class="cs" style="left:1379.7px;top:503px;letter-spacing:0.199px">Misc Settings</div>
<div class="cd" style="left:1379.7px;top:534.2px;letter-spacing:-0.118px">General, Notifications, Preview, Privacy</div>
<svg class="bi" style="left:1315px;top:470px" width="60" height="60" viewBox="0 0 60 60"><g transform="scale(0.07092)" fill="none" stroke="#455a64" stroke-width="15" stroke-linecap="round" stroke-linejoin="round">
<path d="M272 478q-45-10-45-70q0-62 60-70q-5-55 25-95q30-40 85-35q55 5 82 62q60-20 95 30q22 35 18 75q45 15 40 62q-5 40-40 48q-15 60-80 118l-150 0q-60-50-90-125z" fill="#fff" stroke="none"/>
<path d="M440 300q40-35 95-15q45 40 38 95q40 10 45 55q-5 30-35 45l-60-100z" fill="#eceff1" stroke="none" opacity=".8"/>
<path d="M268 478q-40-12-40-68q0-60 58-70M290 335q-8-52 22-92q30-40 85-36q50 4 78 55M478 265q58-18 92 32q22 35 17 72M592 372q42 15 38 62q-4 35-32 45M270 490q22 65 85 112M585 490q-15 60-72 112" stroke-width="12"/>
<path d="M437.9 354.3L449.4 325.4L478.0 333.1L473.5 363.9L487.2 371.7L511.6 352.5L532.5 373.4L513.3 397.8L521.1 411.5L551.9 407.0L559.6 435.6L530.7 447.1L530.7 462.9L559.6 474.4L551.9 503.0L521.1 498.5L513.3 512.2L532.5 536.6L511.6 557.5L487.2 538.3L473.5 546.1L478.0 576.9L449.4 584.6L437.9 555.7L422.1 555.7L410.6 584.6L382.0 576.9L386.5 546.1L372.8 538.3L348.4 557.5L327.5 536.6L346.7 512.2L338.9 498.5L308.1 503.0L300.4 474.4L329.3 462.9L329.3 447.1L300.4 435.6L308.1 407.0L338.9 411.5L346.7 397.8L327.5 373.4L348.4 352.5L372.8 371.7L386.5 363.9L382.0 333.1L410.6 325.4L422.1 354.3z" fill="#8ec5f4" stroke-width="12"/>
<circle cx="430" cy="455" r="62" fill="#eceff1" stroke-width="13"/>
</g></svg>
<div class="ct" style="left:255.7px;top:607px;letter-spacing:-0.223px">Reset</div>
<div class="cs" style="left:255.7px;top:628px;letter-spacing:0.028px">Reset Settings</div>
<div class="cd" style="left:255.7px;top:660.2px;letter-spacing:-0.113px">Reset All Settings and Customizations</div>
<svg class="bi" style="left:195px;top:595px" width="60" height="60" viewBox="0 0 60 60"><g transform="scale(0.07092)" fill="none" stroke="#455a64" stroke-width="15" stroke-linecap="round" stroke-linejoin="round">
<circle cx="350" cy="372" r="150" fill="#eceff1" stroke="none"/>
<path d="M340 206a166 166 0 1 0 148 74" stroke-width="15"/>
<path d="M503 258l-46 6 14 36" stroke-width="14"/>
<path d="M500 260l-42 5 14 30z" fill="#455a64" stroke="none"/>
<circle cx="348" cy="375" r="84" fill="#8ec5f4" stroke="none"/>
<path d="M303 298a89 89 0 1 0 90 2" stroke-width="14"/>
<path d="M348 272v102" stroke-width="14"/>
</g></svg>
<svg class="abs" style="left:90px;top:695px;z-index:9" width="145" height="75" viewBox="90 695 145 75"><path d="M226.600 702.500L121 747.600" stroke="#fe7f3f" stroke-width="4.400" fill="none"/><path d="M94.900 758.600L118.300 738.100L126.100 755.900z" fill="#fe7f3f"/></svg>
</body></html>
